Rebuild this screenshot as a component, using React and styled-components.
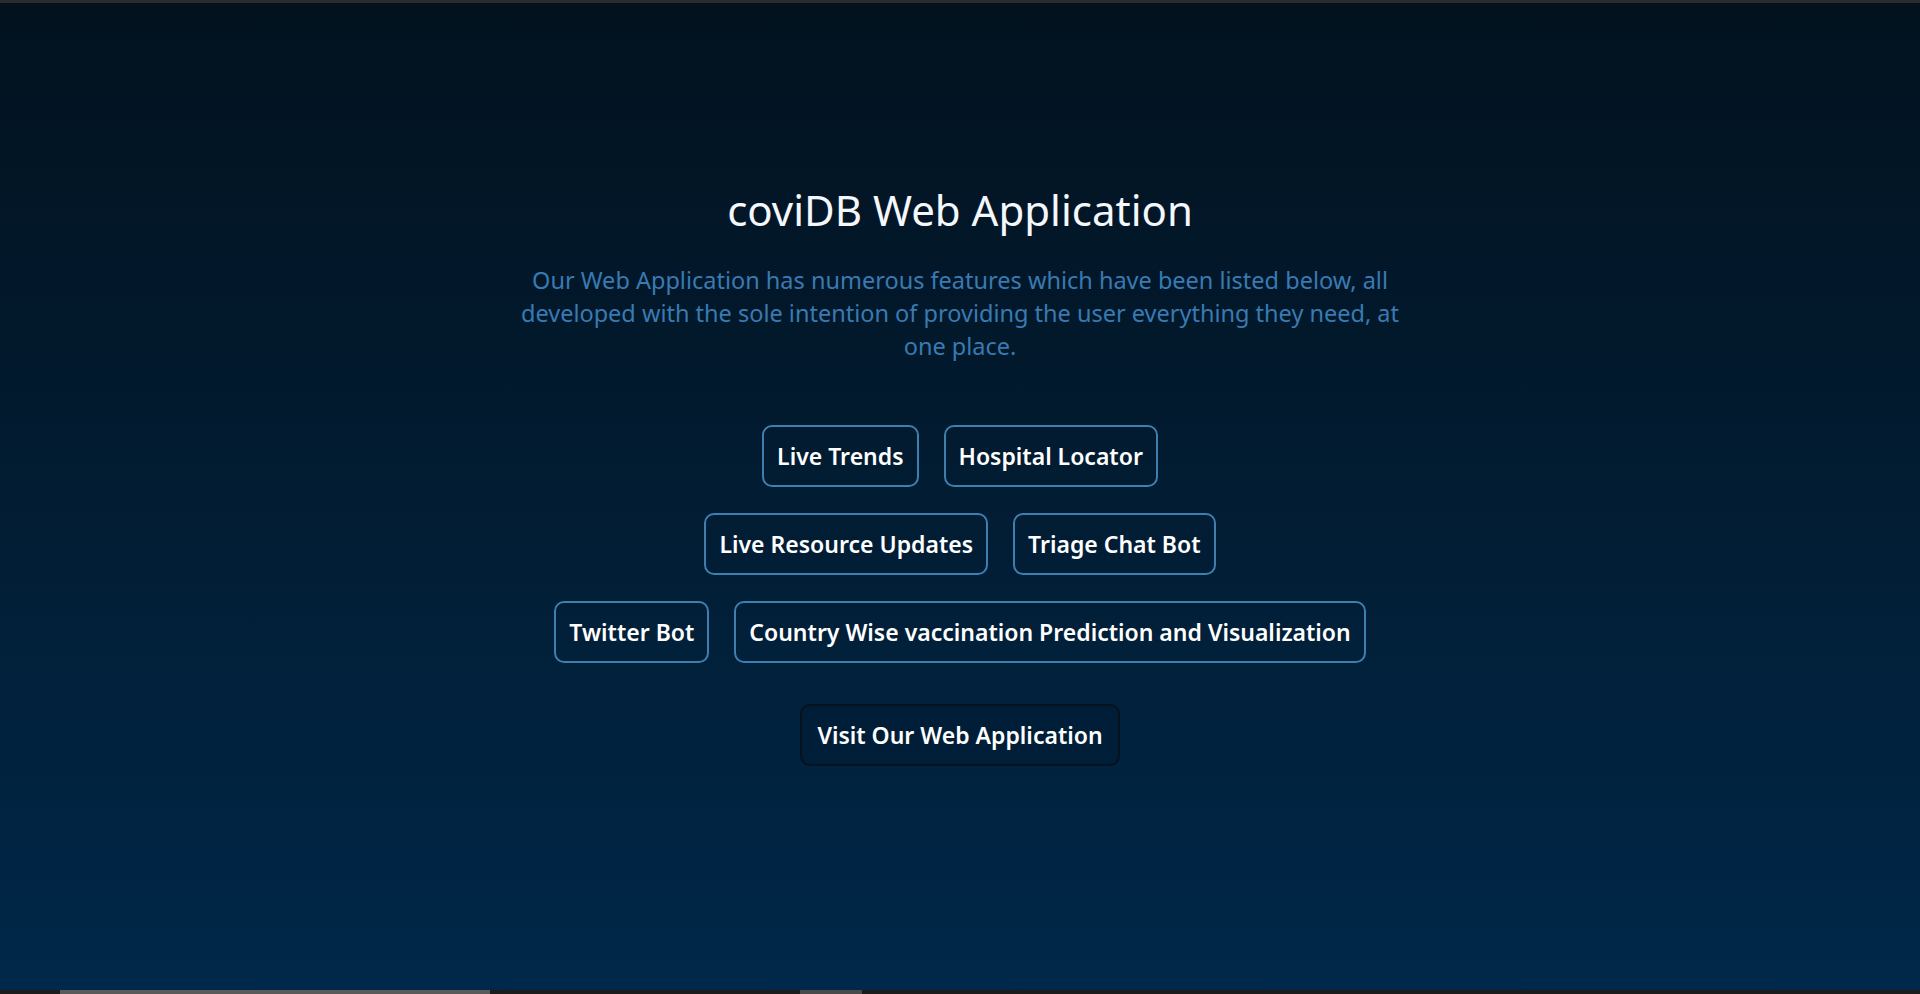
import React from 'react'
import styled, { createGlobalStyle } from 'styled-components'

const features = [
  ['Live Trends', 'Hospital Locator'],
  ['Live Resource Updates', 'Triage Chat Bot'],
  ['Twitter Bot', 'Country Wise vaccination Prediction and Visualization'],
]

const App = () => {
  return (
    <Page>
      <GlobalStyle />
      <TopStrip />

      <Main>
        <Title>coviDB Web Application</Title>
        <Lead>
          Our Web Application has numerous features which have been listed below, all
          developed with the sole intention of providing the user everything they need, at
          one place.
        </Lead>

        <Features>
          {features.map((row, i) => (
            <Row key={i}>
              {row.map((name) => (
                <FeatureBtn key={name}>{name}</FeatureBtn>
              ))}
            </Row>
          ))}
        </Features>

        <VisitBtn>Visit Our Web Application</VisitBtn>
      </Main>

      <BottomBar>
        <Thumb $width={430} $offset={60} $light />
        <Thumb $width={62} $offset={310} />
      </BottomBar>
    </Page>
  )
}

export default App

const GlobalStyle = createGlobalStyle`
  * { box-sizing: border-box; }
  html, body { margin: 0; padding: 0; }
  body {
    font-family: "Noto Sans", "Open Sans", Arial, sans-serif;
    background: #021322;
  }
`

const Page = styled.div`
  min-height: 100vh;
  display: flex;
  flex-direction: column;
  background: linear-gradient(to bottom, #02121f 0%, #021a2e 40%, #00284a 100%);
`

const TopStrip = styled.div`
  height: 3px;
  background: #2b2b2b;
`

const Main = styled.main`
  flex: 1;
  display: flex;
  flex-direction: column;
  align-items: center;
  padding-top: 183px;
`

const Title = styled.h1`
  margin: 0;
  font-size: 42px;
  font-weight: 400;
  line-height: 48px;
  color: #f4f7fb;
`

const Lead = styled.p`
  margin: 30px 0 0;
  max-width: 900px;
  font-size: 23.5px;
  line-height: 33px;
  text-align: center;
  color: #3a7ab2;
`

const Features = styled.div`
  margin-top: 62px;
  display: flex;
  flex-direction: column;
  gap: 26px;
`

const Row = styled.div`
  display: flex;
  justify-content: center;
  gap: 25px;
`

const FeatureBtn = styled.button`
  font-family: inherit;
  font-size: 23px;
  font-weight: 600;
  line-height: 34px;
  color: #ffffff;
  background: transparent;
  border: 2px solid #3f7fb0;
  border-radius: 10px;
  padding: 12px 13px;
  cursor: pointer;
`

const VisitBtn = styled(FeatureBtn)`
  margin-top: 41px;
  padding: 12px 15px;
  border-color: #06121d;
  background: rgba(0, 20, 40, 0.25);
`

const BottomBar = styled.div`
  height: 4px;
  background: #1c1c1c;
  display: flex;
`

const Thumb = styled.div`
  width: ${(p) => p.$width}px;
  margin-left: ${(p) => p.$offset}px;
  background: ${(p) => (p.$light ? '#5a5a5a' : '#4a4a4a')};
`
